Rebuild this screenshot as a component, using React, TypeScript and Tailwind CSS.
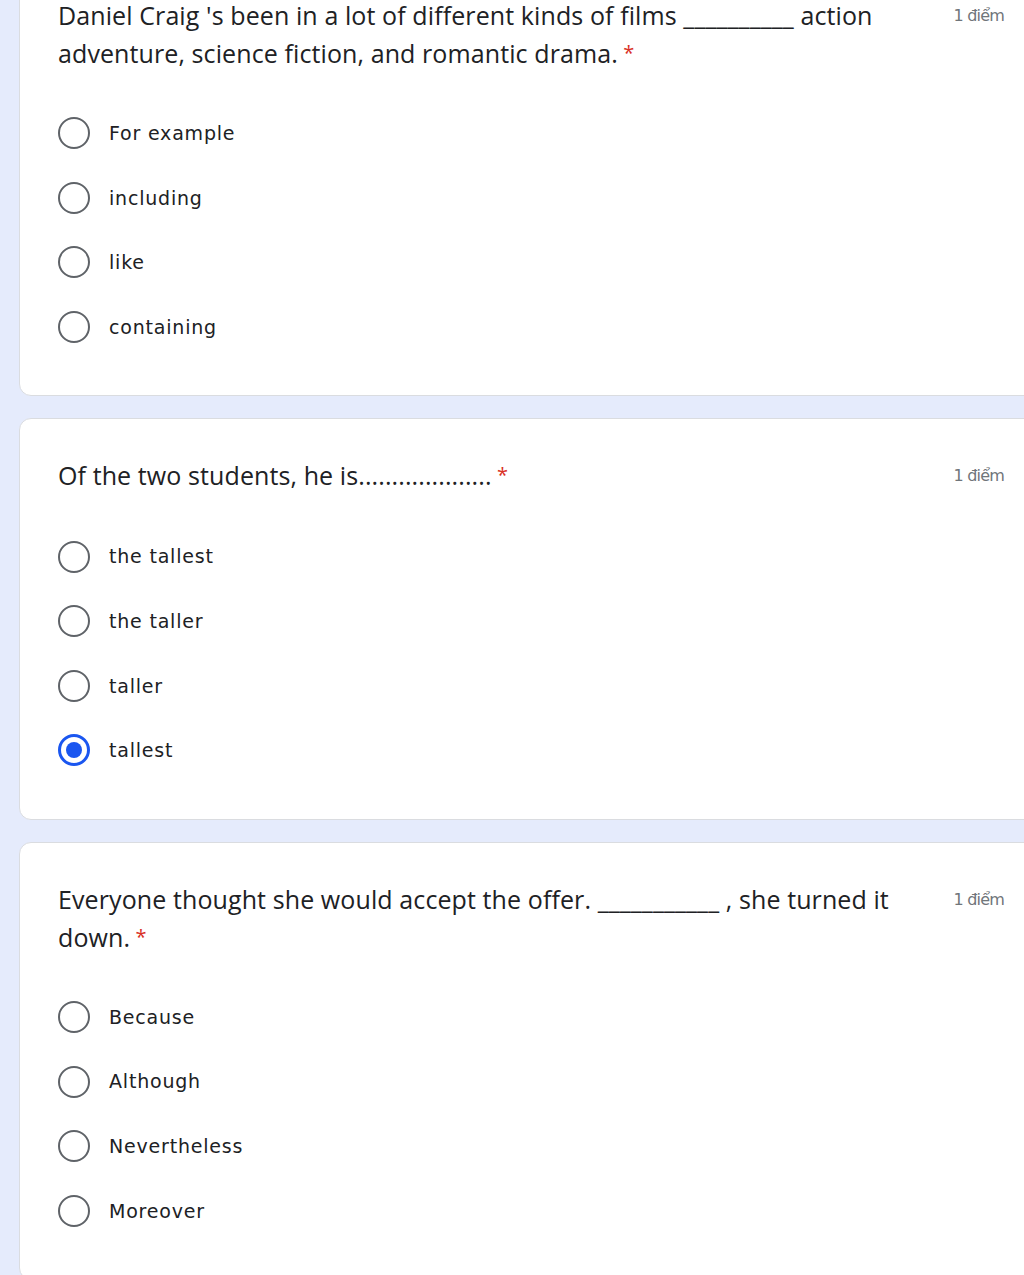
import React from 'react';

type Question = {
  text: string[];
  options: string[];
  selected?: number;
};

const QUESTIONS: Question[] = [
  {
    text: ["Daniel Craig 's been in a lot of different kinds of films __________ action", 'adventure, science fiction, and romantic drama.'],
    options: ['For example', 'including', 'like', 'containing'],
  },
  {
    text: ['Of the two students, he is....................'],
    options: ['the tallest', 'the taller', 'taller', 'tallest'],
    selected: 3,
  },
  {
    text: ['Everyone thought she would accept the offer. ___________ , she turned it', 'down.'],
    options: ['Because', 'Although', 'Nevertheless', 'Moreover'],
  },
];

const Radio: React.FC<{ checked?: boolean }> = ({ checked }) =>
  checked ? (
    <div className="w-[32px] h-[32px] rounded-full border-[3px] border-[#1a56f0] flex items-center justify-center shrink-0">
      <div className="w-[16px] h-[16px] rounded-full bg-[#1a56f0]"></div>
    </div>
  ) : (
    <div className="w-[32px] h-[32px] rounded-full border-[2.5px] border-[#5f6368] shrink-0"></div>
  );

const QuestionCard: React.FC<{ q: Question; first?: boolean }> = ({ q, first }) => (
  <div
    className={`w-[1024px] bg-white rounded-[12px] border border-[#dadce0] pt-[37px] pb-[36px] pl-[38px] pr-[38px] ${first ? '-mt-[42px]' : ''}`}
  >
    <div className="flex items-start justify-between">
      <div className="text-[25px] leading-[38px] text-[#202124] font-['Open_Sans',sans-serif] tracking-[0.1px]">
        {q.text.map((line, i) => (
          <div key={i}>
            {line}
            {i === q.text.length - 1 && <span className="text-[#d93025] text-[20px] align-top"> *</span>}
          </div>
        ))}
      </div>
      <div className="text-[16px] leading-[38px] text-[#70757a] font-['DejaVu_Sans',sans-serif] tracking-[-0.8px] shrink-0 pt-[1px]">
        1 điểm
      </div>
    </div>
    <div className="mt-[29px] flex flex-col">
      {q.options.map((o, i) => (
        <div key={i} className="h-[64.6px] flex items-center gap-[19px]">
          <Radio checked={q.selected === i} />
          <span className="text-[19px] text-[#202124] font-['DejaVu_Sans',sans-serif] tracking-[0.8px]">{o}</span>
        </div>
      ))}
    </div>
  </div>
);

export default function App() {
  return (
    <div className="w-full h-[1275px] overflow-hidden bg-[#e5ebfc]">
      <div className="flex flex-col gap-[22px] pl-[19px]">
        {QUESTIONS.map((q, i) => (
          <QuestionCard key={i} q={q} first={i === 0} />
        ))}
      </div>
    </div>
  );
}
